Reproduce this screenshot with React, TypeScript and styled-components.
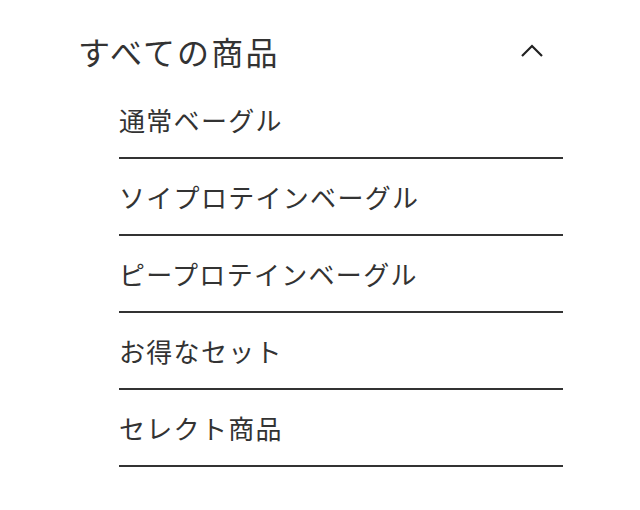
import React from "react";
import styled, { createGlobalStyle } from "styled-components";

const Global = createGlobalStyle`
  html, body { margin: 0; padding: 0; background: #fff; }
  body { font-family: "Noto Sans CJK JP", "Noto Sans", sans-serif; color: #333; }
`;

const Menu = styled.nav`
  width: 485px;
  margin-left: 78px;
  padding-top: 19px;
`;

const Header = styled.div`
  height: 63px;
  display: flex;
  align-items: center;
  justify-content: space-between;
  padding-right: 19px;
`;

const Title = styled.span`
  font-size: 32px;
  letter-spacing: 2.2px;
  line-height: 1;
  color: #333;
`;

const List = styled.ul`
  list-style: none;
  margin: 0;
  padding: 0 0 0 41px;
`;

const Item = styled.li`
  height: 75px;
  display: flex;
  align-items: center;
  border-bottom: 2px solid #333;
  font-size: 26px;
  letter-spacing: 1.3px;
  line-height: 1;
  color: #333;
`;

const Chevron = () => (
  <svg width="24" height="14" viewBox="0 0 24 14" fill="none">
    <path d="M2 12 L12 2 L22 12" stroke="#222" strokeWidth="2.2" />
  </svg>
);

const items = [
  "通常ベーグル",
  "ソイプロテインベーグル",
  "ピープロテインベーグル",
  "お得なセット",
  "セレクト商品",
];

export default function App() {
  return (
    <>
      <Global />
      <Menu>
        <Header>
          <Title>すべての商品</Title>
          <Chevron />
        </Header>
        <List>
          {items.map((t) => (
            <Item key={t}>{t}</Item>
          ))}
        </List>
      </Menu>
    </>
  );
}
